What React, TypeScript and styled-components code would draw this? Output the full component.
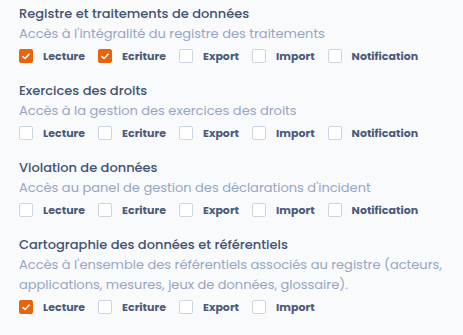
import styled, { createGlobalStyle } from "styled-components";

const GlobalStyle = createGlobalStyle`
  body {
    margin: 0;
    background: #f9fafc;
    font-family: "Poppins", "Noto Sans", "Liberation Sans", sans-serif;
  }
`;

const Page = styled.div`
  width: 463px;
  height: 335px;
  box-sizing: border-box;
  padding: 4px 19px 0;
  display: flex;
  flex-direction: column;
  gap: 15px;
  background: #f9fafc;
`;

const Section = styled.section`
  display: flex;
  flex-direction: column;
`;

const Title = styled.h3`
  margin: 0;
  font-size: 13px;
  line-height: 19px;
  font-weight: 500;
  color: #415273;
`;

const Description = styled.p`
  margin: 1px 0 0;
  font-size: 13px;
  line-height: 20px;
  font-weight: 400;
  color: #95a6c3;
`;

const Options = styled.div`
  display: flex;
  align-items: center;
  gap: 13px;
  margin-top: 2px;
`;

const Option = styled.label`
  display: flex;
  align-items: center;
  gap: 10px;
  cursor: pointer;
`;

const Box = styled.span<{ $checked: boolean }>`
  width: 14px;
  height: 14px;
  box-sizing: border-box;
  border-radius: 2px;
  display: flex;
  align-items: center;
  justify-content: center;
  background: ${(p) => (p.$checked ? "#e8630a" : "#ffffff")};
  border: 1px solid ${(p) => (p.$checked ? "#e8630a" : "#cdd5e2")};
`;

const Label = styled.span`
  font-size: 11px;
  line-height: 20px;
  font-weight: 700;
  color: #4a5b7a;
`;

const sections = [
  {
    title: "Registre et traitements de données",
    description: "Accès à l'intégralité du registre des traitements",
    options: ["Lecture", "Ecriture", "Export", "Import", "Notification"],
    checked: ["Lecture", "Ecriture"],
  },
  {
    title: "Exercices des droits",
    description: "Accès à la gestion des exercices des droits",
    options: ["Lecture", "Ecriture", "Export", "Import", "Notification"],
    checked: [],
  },
  {
    title: "Violation de données",
    description: "Accès au panel de gestion des déclarations d'incident",
    options: ["Lecture", "Ecriture", "Export", "Import", "Notification"],
    checked: [],
  },
  {
    title: "Cartographie des données et référentiels",
    description:
      "Accès à l'ensemble des référentiels associés au registre (acteurs, applications, mesures, jeux de données, glossaire).",
    options: ["Lecture", "Ecriture", "Export", "Import"],
    checked: ["Lecture"],
  },
];

function Check() {
  return (
    <svg width="8" height="7" viewBox="0 0 8 7" fill="none">
      <path
        d="M1 3.6L3.1 5.5L7 1.2"
        stroke="#ffffff"
        strokeWidth="1.6"
        strokeLinecap="round"
        strokeLinejoin="round"
      />
    </svg>
  );
}

export default function App() {
  return (
    <>
      <GlobalStyle />
      <Page>
        {sections.map((s) => (
          <Section key={s.title}>
            <Title>{s.title}</Title>
            <Description>{s.description}</Description>
            <Options>
              {s.options.map((o) => {
                const on = s.checked.includes(o);
                return (
                  <Option key={o}>
                    <Box $checked={on}>{on && <Check />}</Box>
                    <Label>{o}</Label>
                  </Option>
                );
              })}
            </Options>
          </Section>
        ))}
      </Page>
    </>
  );
}
